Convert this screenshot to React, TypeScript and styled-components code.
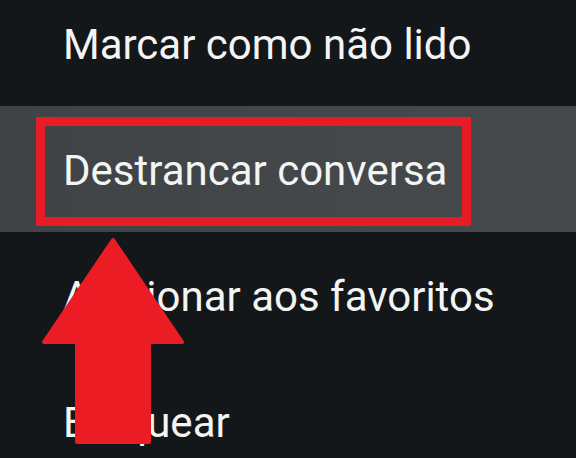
import React from 'react';
import styled, { createGlobalStyle } from 'styled-components';

const GlobalStyle = createGlobalStyle`
  html, body {
    margin: 0;
    padding: 0;
    background: #141719;
  }
`;

const Screen = styled.div`
  position: relative;
  width: 576px;
  height: 458px;
  overflow: hidden;
  background: #141719;
  font-family: Roboto, 'Noto Sans', sans-serif;
`;

// o menu começa um pouco acima do topo do recorte
const Menu = styled.ul`
  list-style: none;
  margin: -20px 0 0;
  padding: 0;
  display: flex;
  flex-direction: column;
`;

const MenuItem = styled.li<{ $active?: boolean }>`
  position: relative;
  height: 126px;
  display: flex;
  align-items: center;
  box-sizing: border-box;
  padding: 2px 0 0 63px;
  font-size: 42px;
  font-weight: 400;
  color: #f3f4f4;
  background: ${(p) => (p.$active ? 'linear-gradient(90deg, #3f4346 0%, #44484b 60%, #45494c 100%)' : 'transparent')};
`;

const HighlightBox = styled.span`
  position: absolute;
  left: 36px;
  top: 11px;
  width: 435px;
  height: 109px;
  box-sizing: border-box;
  border: 9px solid #e81c26;
  pointer-events: none;
`;

const Arrow = styled.svg`
  position: absolute;
  left: 38px;
  top: 234px;
  width: 150px;
  height: 214px;
  pointer-events: none;
`;

const items = [
  'Marcar como não lido',
  'Destrancar conversa',
  'Adicionar aos favoritos',
  'Bloquear',
];

const App: React.FC = () => {
  return (
    <>
      <GlobalStyle />
      <Screen>
        <Menu>
          {items.map((label, i) => (
            <MenuItem key={label} $active={i === 1}>
              {label}
              {i === 1 && <HighlightBox />}
            </MenuItem>
          ))}
        </Menu>
        <Arrow viewBox="38 234 150 214">
          <polygon
            points="113,240 182,342 149,342 149,442 77,442 77,342 44,342"
            fill="#ec1c25"
            stroke="#ec1c25"
            strokeWidth="4"
            strokeLinejoin="round"
          />
        </Arrow>
      </Screen>
    </>
  );
};

export default App;
